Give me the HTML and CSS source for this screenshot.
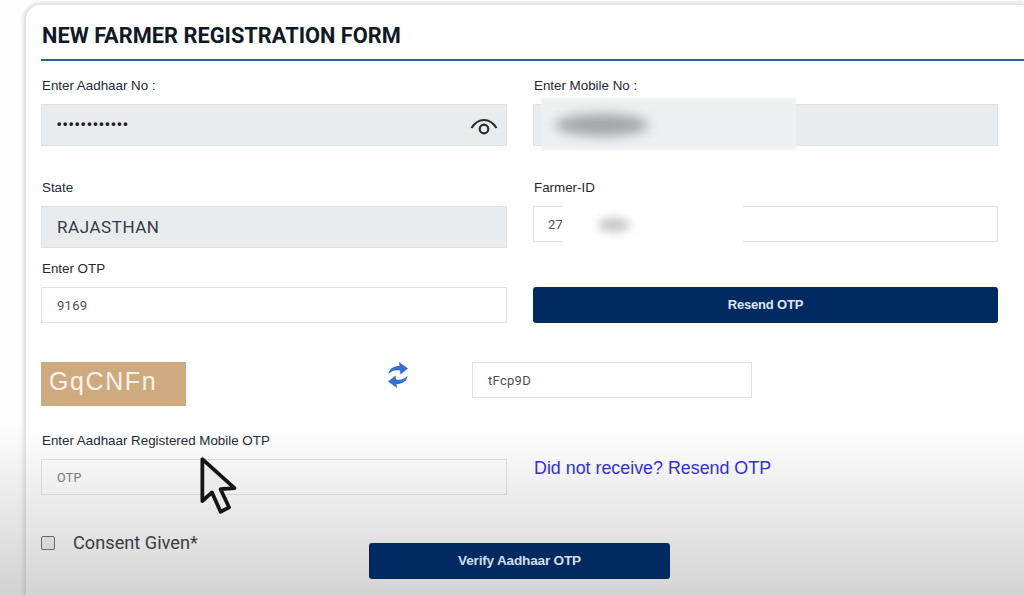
FILE: index.html
```html
<!DOCTYPE html>
<html lang="en">
<head>
<meta charset="utf-8">
<title>New Farmer Registration Form</title>
<link rel="stylesheet" href="styles.css">
</head>
<body>
<div class="page">
  <main class="card">
    <h1 class="title">NEW FARMER REGISTRATION FORM</h1>
    <div class="rule"></div>
    <form class="form">
      <div class="row row-1">
        <div class="field">
          <label class="label">Enter Aadhaar No :</label>
          <div class="input tall filled">
            <span class="dots">••••••••••••</span>
            <svg class="eye" viewBox="0 0 30 22" aria-hidden="true"><path d="M2.5 13C6 7.500 10 5 15 5s9 2.500 12.500 8" /><circle cx="15" cy="14" r="4.300" /></svg>
          </div>
        </div>
        <div class="field">
          <label class="label">Enter Mobile No :</label>
          <div class="input tall filled">
            <span class="patch patch-mobile"></span>
            <span class="smudge smudge-mobile"></span>
          </div>
        </div>
      </div>
      <div class="row row-2">
        <div class="field">
          <label class="label">State</label>
          <div class="input tall filled state">RAJASTHAN</div>
        </div>
        <div class="field">
          <label class="label">Farmer-ID</label>
          <div class="input id">27
            <span class="patch patch-id"></span>
            <span class="smudge smudge-id"></span>
          </div>
        </div>
      </div>
      <div class="row row-3">
        <div class="field">
          <label class="label">Enter OTP</label>
          <div class="input">9169</div>
        </div>
        <div class="field field-btn">
          <button type="button" class="btn">Resend OTP</button>
        </div>
      </div>
      <div class="captcha-row">
        <div class="captcha">GqCNFn</div>
        <svg class="refresh" viewBox="0 0 20 26" aria-hidden="true">
          <path d="M.5 12C1 6.500 6 4 11.500 4L11 0l9 6.500-7.500 6-.5-4C7 7.500 3.500 9 .5 12Z"/>
          <path d="M19.500 14C19 19.500 14 22 8.500 22l.5 4-9-6.500 7.500-6 .5 4C13 18.500 16.500 17 19.500 14Z"/>
        </svg>
        <div class="input captcha-input">tFcp9D</div>
      </div>
      <div class="row row-4">
        <div class="field">
          <label class="label">Enter Aadhaar Registered Mobile OTP</label>
          <div class="input placeholder">OTP</div>
        </div>
        <a class="resend-link">Did not receive? Resend OTP</a>
      </div>
      <div class="bottom-row">
        <label class="consent"><span class="check"></span>Consent Given*</label>
        <button type="button" class="btn verify">Verify Aadhaar OTP</button>
      </div>
    </form>
  </main>
  <div class="shade"></div>
  <svg class="cursor" viewBox="0 0 38 56" aria-hidden="true"><path d="M3 3L3 42 12 34 20 52 28 48 20 31 33 30Z"/></svg>
</div>
</body>
</html>
```
FILE: styles.css
```css
* { box-sizing: border-box; }
html, body { margin: 0; height: 595px; overflow: hidden; background: #fff; }
body { font-family: "Liberation Sans", Arial, sans-serif; color: #333; }
.page { position: relative; height: 595px; padding: 4px 0 0 24px; background: #fdfdfd; overflow: hidden; }
.card {
  height: 620px;
  background: #fff;
  border-top: 1px solid #e4e4e4;
  border-left: 2px solid #e4e4e4;
  border-top-left-radius: 16px;
  box-shadow: 0 -2px 3px #e6e6e6, -2px 0 3px #eee;
  padding-left: 16px;
}
.title {
  margin: 0;
  padding-top: 17px;
  height: 54px;
  font: 700 21.8px/27px Roboto, sans-serif;
  color: #101a26;
  white-space: nowrap;
}
.rule { height: 2px; margin-left: -1px; background: #2f6497; }
.form { width: 957px; margin-left: -1px; }
.row { display: grid; grid-template-columns: 466px 465px; column-gap: 26px; }
.row-1 { margin-top: 16px; }
.row-2 { margin-top: 33px; }
.row-3 { margin-top: 12px; }
.row-4 { margin-top: 26px; }
.label { display: block; height: 16px; margin-bottom: 11px; padding-left: 1px; font-size: 13.4px; line-height: 17px; letter-spacing: -.02px; color: #222a35; }
.input {
  position: relative;
  display: flex;
  align-items: center;
  height: 36px;
  padding-left: 15px;
  background: #fff;
  border: 1px solid #e2e2e2;
  font: 13px Roboto, sans-serif;
  color: #4a4f55;
  letter-spacing: .3px;
}
.tall { height: 42px; }
.filled { background: #e9ecef; border-color: #e1e4e7; }
.state { font-size: 17px; color: #343a40; letter-spacing: .55px; }
.dots { font: 700 12.5px/1 "Liberation Sans", sans-serif; letter-spacing: 1.65px; color: #222; padding-bottom: 2px; }
.eye { position: absolute; right: 7px; top: 10px; width: 30px; height: 22px; fill: none; stroke: #2b2b2b; stroke-width: 2.2; }
.patch, .smudge { position: absolute; display: block; }
.patch-mobile { left: 7px; top: -7px; width: 255px; height: 52px; background: #eef0f2; filter: blur(1px); }
.smudge-mobile { left: 21px; top: 9px; width: 94px; height: 22px; border-radius: 50%; background: #a3a5a7; filter: blur(6px); }
.id { height: 36px; padding-left: 14px; }
.patch-id { left: 28px; top: -1px; width: 181px; height: 37px; background: #fff; }
.smudge-id { left: 64px; top: 11px; width: 32px; height: 14px; border-radius: 50%; background: #c6c6c6; filter: blur(5px); }
.field-btn { padding-top: 27px; }
.btn {
  position: relative;
  z-index: 2;
  display: block;
  width: 100%;
  height: 36px;
  padding: 0 0 2px;
  border: 0;
  border-radius: 3px;
  background: #012a62;
  color: #dfe6ee;
  font: 700 13px "Liberation Sans", sans-serif;
  letter-spacing: -.2px;
}
.captcha-row { display: flex; align-items: flex-start; margin-top: 39px; }
.captcha {
  width: 145px;
  height: 44px;
  padding: 4px 0 0 8px;
  background: #cfaa7e;
  color: #f7f3ee;
  font: 25px/30px "Liberation Sans", sans-serif;
  letter-spacing: 1.6px;
}
.refresh { width: 20px; height: 26px; margin-left: 202px; fill: #356fd0; }
.captcha-input { width: 280px; margin-left: 64px; }
.row-4 .input { height: 36px; background: transparent; }
.placeholder { color: #777; font-size: 12.5px; }
.resend-link { padding: 26px 0 0 1px; font: 17.85px/20px "Liberation Sans", sans-serif; color: #2a2ae0; white-space: nowrap; }
.bottom-row { display: grid; grid-template-columns: 328px 301px; margin-top: 38px; }
.consent { display: flex; align-items: center; height: 20px; font: 18.2px/20px Roboto, sans-serif; color: #262c33; }
.check { width: 14px; height: 14px; margin-right: 18px; border: 1.5px solid #666; border-radius: 2px; background: #f4f4f4; }
.verify { margin-top: 10px; font-size: 13.6px; color: #d5dde6; }
.shade {
  position: absolute;
  inset: 425px 0 0 0;
  background: linear-gradient(to bottom, rgba(150,150,150,0), rgba(120,120,120,.32));
  pointer-events: none;
}
.cursor {
  position: absolute;
  z-index: 3;
  left: 199px;
  top: 456px;
  width: 41px;
  height: 60px;
  fill: #ececec;
  stroke: #151515;
  stroke-width: 3.5;
  stroke-linejoin: round;
}
```
